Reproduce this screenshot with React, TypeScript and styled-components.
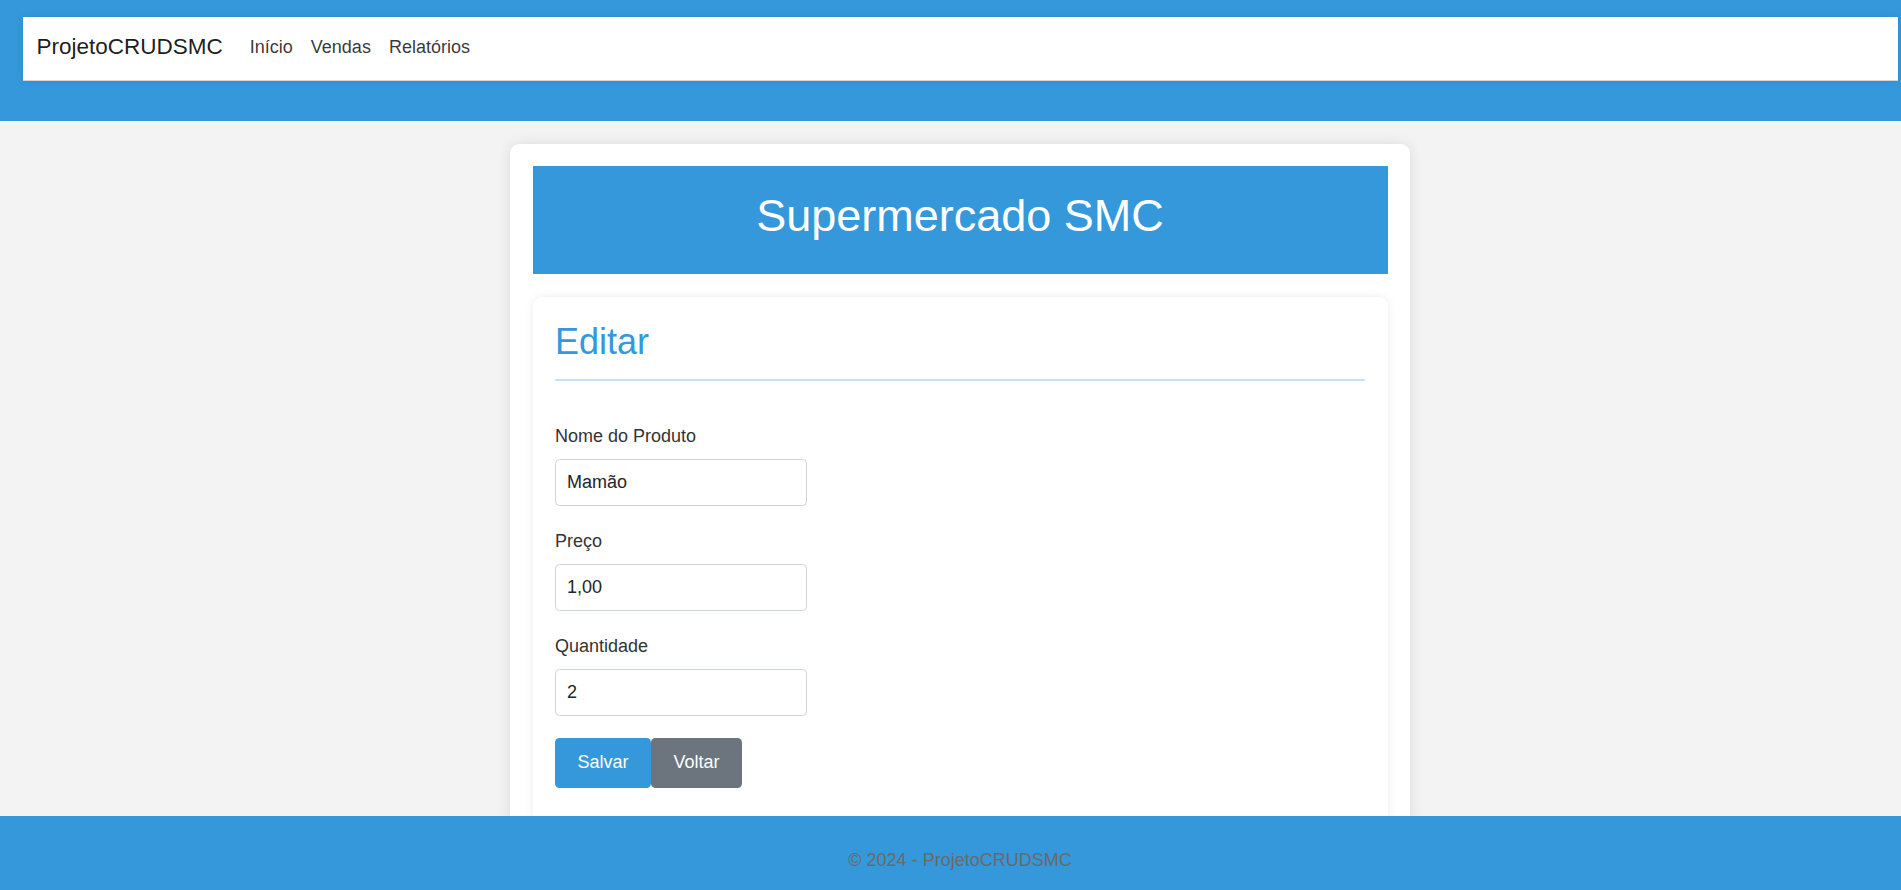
import styled, { createGlobalStyle } from "styled-components";

const GlobalStyle = createGlobalStyle`
  html, body {
    margin: 0;
    padding: 0;
    background: #f3f3f3;
    font-family: "Liberation Sans", Arial, sans-serif;
    color: #212529;
  }
  * {
    box-sizing: border-box;
  }
`;

const Header = styled.header`
  background: #3498db;
  padding: 17px 3px 40px 23px;
`;

const NavBar = styled.nav`
  display: flex;
  align-items: center;
  height: 64px;
  padding: 0 13.5px 3px;
  background: #fff;
  border-bottom: 1px solid #d6d6d6;
  box-shadow: 0 0 8px rgba(0, 0, 0, 0.08);
`;

const Brand = styled.a`
  font-size: 22.5px;
  color: rgba(0, 0, 0, 0.9);
  text-decoration: none;
  margin-right: 18px;
`;

const NavLink = styled.a`
  font-size: 18px;
  color: rgba(0, 0, 0, 0.8);
  text-decoration: none;
  padding: 0 9px;
`;

const Main = styled.main`
  display: flex;
  justify-content: center;
  padding: 23px 0 10px 19px;
`;

const Card = styled.div`
  width: 900px;
  padding: 22px 22.5px 22.5px;
  background: #fff;
  border-radius: 9px;
  box-shadow: 0 0 14px rgba(0, 0, 0, 0.1);
`;

const Banner = styled.div`
  background: #3498db;
  padding: 23px 0 31px;
  text-align: center;
`;

const BannerTitle = styled.h1`
  margin: 0;
  font-size: 45px;
  font-weight: 400;
  line-height: 1.2;
  color: #fff;
`;

const FormCard = styled.section`
  margin-top: 23px;
  padding: 22.5px 22.5px 40px;
  background: #fff;
  border-radius: 9px;
  box-shadow: 0 0 10px rgba(0, 0, 0, 0.08);
`;

const FormTitle = styled.h2`
  margin: 0 0 42px;
  padding-bottom: 16px;
  font-size: 36px;
  font-weight: 400;
  line-height: 1.2;
  color: #3498db;
  border-bottom: 2px solid #c8e2f5;
`;

const Field = styled.div`
  display: flex;
  flex-direction: column;
  margin-bottom: 22px;
`;

const Label = styled.label`
  font-size: 18px;
  line-height: 1.5;
  color: #333;
  margin-bottom: 9px;
`;

const Input = styled.input`
  width: 252px;
  height: 47px;
  padding: 0 11px;
  font-family: inherit;
  font-size: 18px;
  color: #212529;
  background: #fff;
  border: 1px solid #ced4da;
  border-radius: 4.5px;
  outline: none;
`;

const Actions = styled.div`
  display: flex;
`;

const Button = styled.button<{ $variant: "primary" | "secondary" }>`
  height: 50px;
  padding: 0 22.5px;
  font-family: inherit;
  font-size: 18px;
  line-height: 1.5;
  color: #fff;
  border: none;
  border-radius: 4.5px;
  background: ${(p) => (p.$variant === "primary" ? "#3498db" : "#6c757d")};
  cursor: pointer;
`;

const Footer = styled.footer`
  position: fixed;
  left: 0;
  right: 0;
  bottom: 0;
  height: 74px;
  padding: 31px 0 0 19px;
  background: #3498db;
  text-align: center;
  font-size: 18px;
  line-height: 1.5;
  color: #6a6a6a;
`;

const fields = [
  { label: "Nome do Produto", value: "Mamão" },
  { label: "Preço", value: "1,00" },
  { label: "Quantidade", value: "2" },
];

export default function App() {
  return (
    <>
      <GlobalStyle />
      <Header>
        <NavBar>
          <Brand href="#">ProjetoCRUDSMC</Brand>
          <NavLink href="#">Início</NavLink>
          <NavLink href="#">Vendas</NavLink>
          <NavLink href="#">Relatórios</NavLink>
        </NavBar>
      </Header>
      <Main>
        <Card>
          <Banner>
            <BannerTitle>Supermercado SMC</BannerTitle>
          </Banner>
          <FormCard>
            <FormTitle>Editar</FormTitle>
            {fields.map((f) => (
              <Field key={f.label}>
                <Label>{f.label}</Label>
                <Input defaultValue={f.value} />
              </Field>
            ))}
            <Actions>
              <Button $variant="primary">Salvar</Button>
              <Button $variant="secondary">Voltar</Button>
            </Actions>
          </FormCard>
        </Card>
      </Main>
      <Footer>© 2024 - ProjetoCRUDSMC</Footer>
    </>
  );
}
